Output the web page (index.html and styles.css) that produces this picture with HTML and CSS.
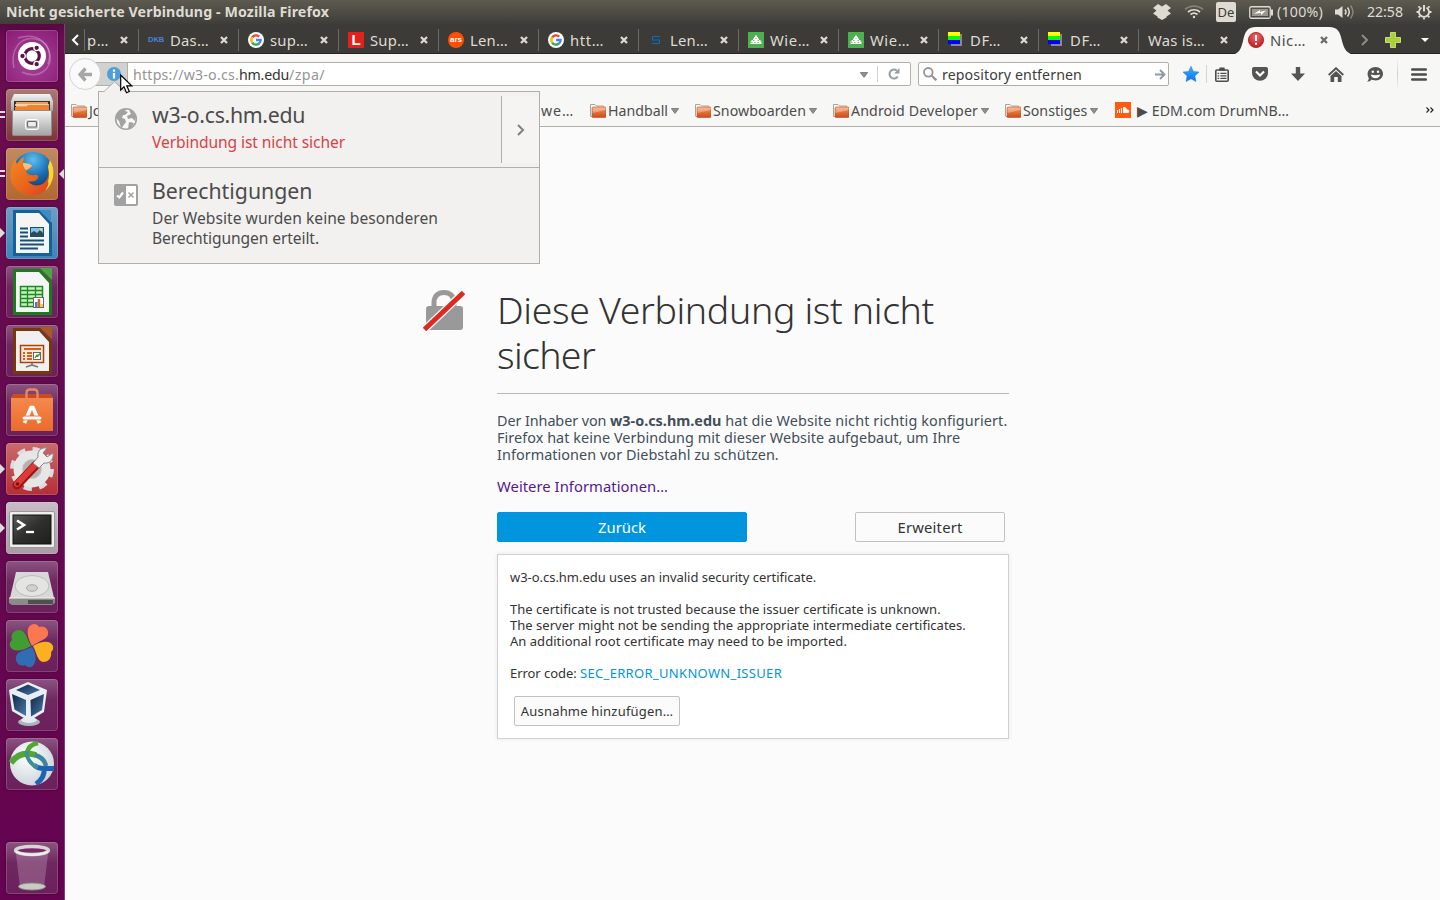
FILE: index.html
```html
<!DOCTYPE html>
<html lang="de">
<head>
<meta charset="utf-8">
<title>Nicht gesicherte Verbindung - Mozilla Firefox</title>
<link rel="stylesheet" href="styles.css">
</head>
<body>
<svg class="defs" width="0" height="0">
  <defs>
    <linearGradient id="gFolder" x1="0" y1="0" x2="0" y2="1"><stop offset="0" stop-color="#f4a26a"/><stop offset=".5" stop-color="#e0703a"/><stop offset="1" stop-color="#cf4a1e"/></linearGradient>
    <linearGradient id="gSteel" x1="0" y1="0" x2="0" y2="1"><stop offset="0" stop-color="#f4f4f4"/><stop offset="1" stop-color="#a3a3a3"/></linearGradient>
    <linearGradient id="gFox" x1="0" y1="0" x2="1" y2="1"><stop offset="0" stop-color="#f48a20"/><stop offset=".6" stop-color="#e8601c"/><stop offset="1" stop-color="#d93c20"/></linearGradient>
    <radialGradient id="gGlobe" cx=".5" cy=".2" r=".8"><stop offset="0" stop-color="#5cc0ee"/><stop offset=".5" stop-color="#1a6fb5"/><stop offset="1" stop-color="#10305f"/></radialGradient>
    <linearGradient id="gBag" x1="0" y1="0" x2="0" y2="1"><stop offset="0" stop-color="#f58d50"/><stop offset="1" stop-color="#ec6a2c"/></linearGradient>
    <linearGradient id="gStar" x1="0" y1="0" x2="0" y2="1"><stop offset="0" stop-color="#3fa9ff"/><stop offset="1" stop-color="#0a78e8"/></linearGradient>
    <linearGradient id="gTerm" x1="0" y1="0" x2="1" y2="1"><stop offset="0" stop-color="#5a5a58"/><stop offset=".5" stop-color="#2f2f2d"/><stop offset="1" stop-color="#1e1e1c"/></linearGradient>
    <radialGradient id="gRed" cx=".5" cy=".3" r=".7"><stop offset="0" stop-color="#f06a6a"/><stop offset="1" stop-color="#c01820"/></radialGradient>
    <radialGradient id="gBall" cx=".4" cy=".35" r=".7"><stop offset="0" stop-color="#fff"/><stop offset="1" stop-color="#c9d3d8"/></radialGradient>
    <linearGradient id="gCube" x1="0" y1="0" x2="1" y2="1"><stop offset="0" stop-color="#0e2748"/><stop offset="1" stop-color="#4a7aa8"/></linearGradient>
  </defs>
  <symbol id="close" viewBox="0 0 8 8"><path d="M1 1L7 7M7 1L1 7" stroke="currentColor" stroke-width="2.3" fill="none"/></symbol>
  <symbol id="google" viewBox="0 0 16 16"><circle cx="8" cy="8" r="8" fill="#fff"/><g fill="none" stroke-width="2.4"><path d="M4.2 5.4A4.6 4.6 0 0 1 11.2 4.7" stroke="#ea4335"/><path d="M4.2 5.4A4.6 4.6 0 0 0 4.2 10.6" stroke="#fbbc05"/><path d="M4.2 10.6A4.6 4.6 0 0 0 11 11.5" stroke="#34a853"/><path d="M8 8H12.6A4.6 4.6 0 0 1 11 11.5" stroke="#4285f4"/></g></symbol>
  <symbol id="folder" viewBox="0 0 16 15"><path d="M.5 13V1.500H5L6.500 3H13.500V6" fill="#fff" stroke="#a5a5a0"/><path d="M.5 13.500H3" stroke="#a5a5a0"/><rect x="2" y="4" width="14" height="10.500" rx="1" fill="url(#gFolder)" stroke="#c24c1c" stroke-width=".6"/><path d="M2.500 10V4.500H15.500V7Z" fill="#fff" opacity=".3"/></symbol>
  <symbol id="down" viewBox="0 0 8 6"><path d="M.3 .5H7.700L4 5.500Z" fill="#8f8f8b" stroke="#74746f" stroke-width=".8"/></symbol>
  <symbol id="trees" viewBox="0 0 16 16"><rect width="16" height="16" fill="#4caf50"/><path d="M7 3.500H9V5H10V6.500H11V8H12.500V9.500H13.500V12H2.500V9.500H3.500V8H5V6.500H6V5H7Z" fill="#fff"/><path d="M5 8.500H6.500M9.500 8.500H11M6 10.500H7.500M9.500 10.500H11M3 10.500H4.500M7.500 6.500H8.500" stroke="#4caf50" stroke-width=".7"/></symbol>
  <symbol id="rainbow" viewBox="0 0 16 16"><rect x="3" y="2" width="11" height="12" fill="#8a8a8a"/><rect width="12" height="4" fill="#ff0"/><rect y="4" width="12" height="4" fill="#0f0"/><rect y="8" width="12" height="4" fill="#00f"/></symbol>
</svg>

<header class="panel">
  <span class="panel-title"><span class="t t1">Nicht gesicherte Verbindung - Mozilla Firefox</span></span>
  <svg class="p-drop" width="18" height="16" viewBox="0 0 18 16" fill="#dfdbd2"><path d="M5 0L9 2.500L13 0L18 4L14.500 6.500L18 9.500L13.500 12.500V13.500L9 16L4.500 13.500V12.500L0 9.500L3.500 6.500L0 4Z"/></svg>
  <svg class="p-wifi" width="20" height="14" viewBox="0 0 20 14" fill="none" stroke="#dfdbd2" stroke-width="1.700"><path d="M1 4.500C6 0 14 0 19 4.500" opacity=".35"/><path d="M4 7C7.500 4 12.500 4 16 7"/><path d="M6.500 9.500C8.500 8 11.500 8 13.500 9.500"/><circle cx="10" cy="12" r="1.200" fill="#dfdbd2" stroke="none"/></svg>
  <span class="p-lang">De</span>
  <svg class="p-bat" width="25" height="13" viewBox="0 0 25 13"><rect x=".75" y=".75" width="20.500" height="11.500" rx="1.500" fill="none" stroke="#dfdbd2" stroke-width="1.300"/><rect x="22" y="3.500" width="2" height="6" fill="#dfdbd2"/><rect x="3" y="3" width="16" height="7" fill="#99968e"/><path d="M5 7.800L11 4V6L17 4.500L12 9V7Z" fill="#fff"/></svg>
  <span class="t t2">(100%)</span>
  <svg class="p-vol" width="20" height="14" viewBox="0 0 20 14" fill="none" stroke="#dfdbd2" stroke-width="1.500"><path d="M0 4.500H3L7.500 1V13L3 9.500H0Z" fill="#dfdbd2" stroke="none"/><path d="M10 4.500Q12 7 10 9.500M12.500 2.500Q16 7 12.500 11.500"/><path d="M15.500 .5Q20.500 7 15.500 13.500" opacity=".4"/></svg>
  <span class="t t3">22:58</span>
  <svg class="p-gear" width="16" height="16" viewBox="0 0 16 16" fill="none" stroke="#dfdbd2"><path d="M5.500 3.600A5 5 0 1 0 10.500 3.600" stroke-width="1.800"/><path d="M8 1V7.500" stroke-width="2"/><path d="M3.700 3.700L2.400 2.400M12.300 3.700L13.600 2.400M3 8H.5M13 8H15.500M4 12L2.600 13.400M12 12L13.400 13.400M8 13.500V15.500" stroke-width="1.800"/></svg>
</header>

<div class="main">
  <nav class="launcher">
    <div class="tile dash"><svg viewBox="0 0 52 52"><g fill="none" stroke="#fff" stroke-opacity=".25" stroke-width="1.500"><path d="M8 38C4 20 14 6 30 9C42 12 46 24 42 34"/><path d="M12 8C32 2 46 14 44 32C40 44 28 48 16 42"/></g><circle cx="26" cy="26" r="14" fill="#fff"/><circle cx="26" cy="26" r="7.300" fill="none" stroke="#5e1049" stroke-width="3.200"/><g fill="#5e1049" stroke="#fff" stroke-width="1.300"><circle cx="16.500" cy="26" r="2.800"/><circle cx="30.700" cy="17.800" r="2.800"/><circle cx="30.700" cy="34.200" r="2.800"/></g></svg></div>
    <div class="tile files"><i class="bars"></i><svg viewBox="0 0 52 52"><path d="M8 5H44L47 12V22H5V12Z" fill="url(#gSteel)"/><rect x="8" y="12" width="36" height="12" fill="#3a322c"/><rect x="10" y="13" width="32" height="10" fill="#f2a04c"/><path d="M9 16H43M11 19H41" stroke="#fbe8d0" stroke-width="1.300"/><path d="M9 18H20L22 16H43V24H9Z" fill="#ee8230"/><rect x="6.500" y="21.500" width="39" height="25" rx="1" fill="url(#gSteel)" stroke="#8d8d8d"/><rect x="19.500" y="30.500" width="13" height="10" rx="2" fill="#d0d0d0" stroke="#fff"/><rect x="21.500" y="32.500" width="9" height="5.500" rx="1" fill="#eee" stroke="#6a6a6a" stroke-width="1.200"/></svg></div>
    <div class="tile fox"><i class="bars"></i><i class="focus"></i><svg viewBox="0 0 52 52"><circle cx="27" cy="24" r="20" fill="url(#gGlobe)"/><path d="M44 12C50 22 48 36 39 43C31 49 18 49 10 41C3 34 3 23 7 15L9 11L11 16C13 13 15 10 18 9L17 15C21 15 25 16 26 18C25 21 22 22 20 23C21 26 24 28 29 27C31 26 33 28 32 30C30 34 25 34 22 33C25 38 33 39 38 35C43 31 43 24 42 19Z" fill="url(#gFox)"/><path d="M44 12C50 22 48 36 39 43C42 38 43 36 42 33C44 28 43 23 42 19Z" fill="#fcd835"/><path d="M17 15C21 15 25 16 26 18C24 20 22 21 20 22C18 20 17 18 17 15Z" fill="#fbc084"/></svg></div>
    <div class="tile writer"><i class="run"></i><svg viewBox="0 0 52 52"><path d="M7 3H34L46 16V49H7Z" fill="#14619b"/><path d="M10 6H33L43 17V46H10Z" fill="#f5f5f5"/><path d="M33 3H45V15Z" fill="#3f8cc0"/><g stroke="#16507a" stroke-width="2"><path d="M14 21.500H22M14 25.500H22M14 29.500H22M14 33.500H38M14 37.500H38M14 41.500H32"/></g><rect x="24.500" y="20.500" width="13" height="9" fill="#7cc4ee" stroke="#16507a"/><path d="M25 29V26L28 24L31 26L34 23L37 26V29Z" fill="#2d4a55"/><circle cx="35" cy="22.500" r="1.300" fill="#f8d749"/></svg></div>
    <div class="tile"><svg viewBox="0 0 52 52"><path d="M7 3H34L46 16V49H7Z" fill="#1a7d1c"/><path d="M10 6H33L43 17V46H10Z" fill="#f5f5f5"/><path d="M34 2H46V14Z" fill="#47a83e"/><rect x="14.500" y="20.500" width="22" height="20" fill="#c9f0bd" stroke="#1c8c22" stroke-width="1.500"/><path d="M14 24.500H37M14 28.500H37M14 32.500H37M14 36.500H37M21.500 20V41M29.500 20V41" stroke="#1c8c22" stroke-width="1.300"/><rect x="27.500" y="31.500" width="10" height="10" fill="#fff" stroke="#667"/><rect x="29" y="36" width="2.500" height="5" fill="#3385c6"/><rect x="31.700" y="33" width="2.500" height="8" fill="#e25a26"/><rect x="34.500" y="38" width="2.300" height="3" fill="#f2c61f"/></svg></div>
    <div class="tile"><svg viewBox="0 0 52 52"><path d="M7 3H34L46 16V49H7Z" fill="#78380c"/><path d="M10 6H33L43 17V46H10Z" fill="#f0f0f0"/><path d="M34 2H46V14Z" fill="#a85a20"/><rect x="14.500" y="20.500" width="23" height="17" fill="#fce8da" stroke="#a8420c" stroke-width="1.500"/><path d="M18 24H35M17 28H19M17 31H19M17 34H19M21 28H26M21 31H26M21 34H26" stroke="#d4601c" stroke-width="2"/><rect x="27.500" y="27.500" width="7" height="7" fill="#fff" stroke="#666"/><path d="M29 33L31 30L32 31L34 28.500" stroke="#329b32" fill="none" stroke-width="1.300"/><path d="M26 38V40L20 42M26 40L32 42" stroke="#777" stroke-width="1.500" fill="none"/></svg></div>
    <div class="tile"><svg viewBox="0 0 52 52"><path d="M5 14L8 10H44L47 14V47H5Z" fill="url(#gBag)"/><path d="M5 14L8 10H44L47 14Z" fill="#c84d1a"/><path d="M20.500 17V9Q20.500 5.500 24 5.500H28Q31.500 5.500 31.500 9V17" fill="none" stroke="#e58a60" stroke-width="2.300"/><path d="M18.500 39L25 23.500H27L33.500 39" fill="none" stroke="#fff" stroke-width="3.600"/><path d="M17 34H35" stroke="#ee7436" stroke-width="4.800"/><path d="M18 34H34" stroke="#fff" stroke-width="3" stroke-linecap="round"/></svg></div>
    <div class="tile settings"><i class="run"></i><svg viewBox="0 0 52 52"><circle cx="26" cy="26" r="19.500" fill="none" stroke="#dcdcdc" stroke-width="5" stroke-dasharray="8 7.320"/><circle cx="26" cy="26" r="14" fill="none" stroke="#e6e6e6" stroke-width="9"/><circle cx="26" cy="26" r="9.500" fill="#b7b0b0" stroke="#cfcfcf"/><path d="M11 42L30 22" stroke="#a01414" stroke-width="9" stroke-linecap="round"/><path d="M11 41L30 21" stroke="#dd3b38" stroke-width="6" stroke-linecap="round"/><path d="M27 20L33 25L38 20C44 21 48 16 47 10L41 14L37 10L41 5C35 4 31 8 32 14Z" fill="#eee" stroke="#888"/><circle cx="11.500" cy="41" r="1.800" fill="#7a1010"/></svg></div>
    <div class="tile term"><i class="run"></i><svg viewBox="0 0 52 52"><rect x="3.500" y="9.500" width="45" height="36" rx="1.500" fill="#eee" stroke="#999"/><rect x="7" y="13" width="38" height="29" fill="url(#gTerm)" stroke="#111"/><path d="M11 18.500L18 23L11 27.500" fill="none" stroke="#fff" stroke-width="2.600"/><path d="M20 30H28" stroke="#fff" stroke-width="2.300"/></svg></div>
    <div class="tile"><svg viewBox="0 0 52 52"><path d="M10 11H42L48 37H4Z" fill="#d8d8d6"/><path d="M3 37H49V42L46 44H6L3 42Z" fill="#8b8b89"/><path d="M22 39H47V43H22Z" fill="#50504e"/><ellipse cx="26" cy="25" rx="17" ry="10.500" fill="#e4e4e2" stroke="#bbb"/><ellipse cx="26" cy="27" rx="5.500" ry="3.300" fill="#d0d0ce" stroke="#aaa"/><path d="M3 37H49" stroke="#f3f3f3"/></svg></div>
    <div class="tile"><svg viewBox="0 0 52 52"><path d="M26 26C20 15 20 5 28 4C32 4 33 7 33 7C38 5 43 9 42 14C42 19 33 21 26 26Z" fill="#fb7750"/><path d="M25 26C15 32 6 32 4 26C3 22 6 20 6 20C4 15 8 9 14 10C20 11 21 19 25 26Z" fill="#3f9d33"/><path d="M26 27C32 36 30 45 25 47C21 48 19 45 19 45C14 47 9 43 10 37C11 31 20 30 26 27Z" fill="#2f6db5"/><path d="M27 26C37 20 45 21 47 26C48 30 45 32 45 32C46 37 43 42 37 42C31 41 31 33 27 26Z" fill="#fbb020"/></svg></div>
    <div class="tile"><svg viewBox="0 0 52 52"><ellipse cx="23" cy="43" rx="11" ry="4" fill="#a9b4bf"/><ellipse cx="23" cy="41" rx="8" ry="3" fill="#e3e9ee"/><path d="M3 11L22 3L41 11L38 33L23 42L6 32Z" fill="#e8eef4"/><path d="M10 11L22 5.500L34 11L22 16Z" fill="url(#gCube)"/><path d="M6 15L20 21V37L8.500 30.500Z" fill="url(#gCube)"/><path d="M24.500 21L38 15L36 31L25 37.500Z" fill="url(#gCube)"/></svg></div>
    <div class="tile"><svg viewBox="0 0 52 52"><circle cx="26" cy="25.500" r="22" fill="url(#gBall)"/><path d="M5 25C11 16 20 14 30 17" fill="none" stroke="#54a536" stroke-width="6"/><path d="M29 17C36 19 39 23 40 28" fill="none" stroke="#3a86a0" stroke-width="4.500"/><path d="M21 15C22 9 26 6 32 5" fill="none" stroke="#54a536" stroke-width="4.500"/><path d="M28 27C31 30 34 30.500 38 30.500H48M38 29C39 37 36 42 30 46" fill="none" stroke="#1c64b0" stroke-width="5"/><path d="M21 13C20 20 25 27 32 29.500" fill="none" stroke="#3f8f9a" stroke-width="4"/></svg></div>
    <div class="tile trash"><svg viewBox="0 0 52 52"><path d="M10 12L14 46Q26 50 38 46L42 12Z" fill="#fff" fill-opacity=".2"/><ellipse cx="26" cy="44.500" rx="13.500" ry="3.500" fill="#c9cbc5" stroke="#8c8e88"/><ellipse cx="26" cy="8.500" rx="16.500" ry="4" fill="#7b2867" stroke="#d5d7d0" stroke-width="3.300"/><path d="M10 10Q26 16 42 10" fill="none" stroke="#eee" stroke-width="2"/></svg></div>
  </nav>

  <div class="browser">
    <div class="tabs">
      <svg class="scroll-l" width="8" height="12" viewBox="0 0 8 12"><path d="M7 1L2 6L7 11" fill="none" stroke="#fff" stroke-width="2"/></svg>
      <div class="tab first"><span class="label"><span class="t t4">p…</span></span><svg class="x"><use href="#close"/></svg></div>
      <div class="tab"><span class="fav dkb">DKB</span><span class="label"><span class="t t5">Das…</span></span><svg class="x"><use href="#close"/></svg></div>
      <div class="tab"><svg class="fav"><use href="#google"/></svg><span class="label"><span class="t t5">sup…</span></span><svg class="x"><use href="#close"/></svg></div>
      <div class="tab"><span class="fav leo">L</span><span class="label"><span class="t t5">Sup…</span></span><svg class="x"><use href="#close"/></svg></div>
      <div class="tab"><span class="fav ars">ars</span><span class="label"><span class="t t5">Len…</span></span><svg class="x"><use href="#close"/></svg></div>
      <div class="tab"><svg class="fav"><use href="#google"/></svg><span class="label"><span class="t t9">htt…</span></span><svg class="x"><use href="#close"/></svg></div>
      <div class="tab"><svg class="fav" viewBox="0 0 16 16"><path d="M12 4.500H4.500V8H11.500V11.500H4" fill="none" stroke="#0a6cb4" stroke-width="1.200"/></svg><span class="label"><span class="t t5">Len…</span></span><svg class="x"><use href="#close"/></svg></div>
      <div class="tab"><svg class="fav"><use href="#trees"/></svg><span class="label"><span class="t t9">Wie…</span></span><svg class="x"><use href="#close"/></svg></div>
      <div class="tab"><svg class="fav"><use href="#trees"/></svg><span class="label"><span class="t t9">Wie…</span></span><svg class="x"><use href="#close"/></svg></div>
      <div class="tab"><svg class="fav"><use href="#rainbow"/></svg><span class="label"><span class="t t9">DF…</span></span><svg class="x"><use href="#close"/></svg></div>
      <div class="tab"><svg class="fav"><use href="#rainbow"/></svg><span class="label"><span class="t t9">DF…</span></span><svg class="x"><use href="#close"/></svg></div>
      <div class="tab noicon"><span class="label"><span class="t t12">Was is…</span></span><svg class="x"><use href="#close"/></svg></div>
      <div class="tab active">
        <svg class="shape" width="126" height="28" viewBox="0 0 126 28"><path d="M0 28C8 27 10 22 12 14C14 5 16 0 25 0H98C107 0 109 5 111 14C113 22 116 27 124 28Z" fill="#f7f7f6"/></svg>
        <svg class="fav" viewBox="0 0 16 16"><circle cx="8" cy="8" r="7.600" fill="url(#gRed)" stroke="#a81a20" stroke-width=".8"/><path d="M8 3V9M8 10.800V12.800" stroke="#fff" stroke-width="2"/></svg>
        <span class="label"><span class="t t13">Nic…</span></span><svg class="x"><use href="#close"/></svg>
      </div>
      <svg class="scroll-r" width="8" height="12" viewBox="0 0 8 12"><path d="M1 1L6 6L1 11" fill="none" stroke="#8d8c88" stroke-width="2"/></svg>
      <svg class="plus" width="16" height="16" viewBox="0 0 16 16"><path d="M5.500 .5H10.500V5.500H15.500V10.500H10.500V15.500H5.500V10.500H.5V5.500H5.500Z" fill="#a8cf3c" stroke="#c3df6c"/></svg>
      <svg class="all" width="8" height="4" viewBox="0 0 8 4"><path d="M0 0H8L4 4Z" fill="#fff"/></svg>
    </div>

    <div class="navbar">
      <div class="back"><svg width="14" height="15" viewBox="0 0 14 15"><path d="M7.500 1.500L2 7.500L7.500 13.500M2.500 7.500H14" fill="none" stroke="#a6a6a4" stroke-width="3.400"/></svg></div>
      <div class="url">
        <div class="ident"><svg width="14" height="14" viewBox="0 0 14 14"><circle cx="7" cy="7" r="7" fill="#4a9fdc"/><path d="M7 2.500V4.800M7 6V11.500" stroke="#fff" stroke-width="2.200"/></svg></div>
        <span class="addr"><span class="t t14">https://w3-o.cs.</span><span class="t t15 host">hm.edu</span><span class="t t16">/zpa/</span></span>
        <svg class="tri" width="8" height="6"><use href="#down"/></svg>
        <div class="reload"><svg width="12" height="12" viewBox="0 0 12 12"><path d="M9.800 8.500A4.500 4.500 0 1 1 8.800 2.500" fill="none" stroke="#939da8" stroke-width="2"/><path d="M11.500 0V5.500H6Z" fill="#939da8"/></svg></div>
      </div>
      <div class="search">
        <svg width="14" height="14" viewBox="0 0 14 14" fill="none" stroke="#969696"><circle cx="5.300" cy="5.300" r="4.300" stroke-width="1.800"/><path d="M8.500 8.500L13.300 13.300" stroke-width="2.300"/></svg>
        <span class="q"><span class="t t17">repository entfernen</span></span>
        <svg class="go" width="11" height="11" viewBox="0 0 11 11"><path d="M0 5.500H9M5 1L9.500 5.500L5 10" fill="none" stroke="#8e9aa6" stroke-width="1.900"/></svg>
      </div>
      <div class="tools">
        <svg width="16" height="16" viewBox="0 0 16 16"><path d="M8 .3L10.400 5.400L16 6.100L11.900 9.900L13 15.600L8 12.800L3 15.600L4.100 9.900L0 6.100L5.600 5.400Z" fill="url(#gStar)" stroke="#1b7fe0" stroke-width=".5"/></svg>
        <i class="sep"></i>
        <svg class="tl" width="14" height="15" viewBox="0 0 14 15"><rect x=".8" y="3" width="12.400" height="11.200" rx="1" fill="#f7f7f6" stroke="#4c4c4c" stroke-width="1.600"/><path d="M4 3.800L4.500 .5H9.500L10 3.800Z" fill="#4c4c4c"/><path d="M2.600 6.300H4.200M2.600 8.800H4.200M2.600 11.300H4.200M5.400 6.300H11.500M5.400 8.800H11.500M5.400 11.300H11.500" stroke="#4c4c4c" stroke-width="1.300"/></svg>
        <svg class="tp" width="16" height="14" viewBox="0 0 16 14"><path d="M2 0H14Q16 0 16 2V6A8 7.800 0 0 1 0 6V2Q0 0 2 0Z" fill="#555"/><path d="M4 4.500L8 8.500L12 4.500" stroke="#fff" stroke-width="2.200" fill="none"/></svg>
        <svg class="td" width="14" height="14" viewBox="0 0 14 14"><path d="M4.800 0H9.200V6.500H14L7 14L0 6.500H4.800Z" fill="#555"/></svg>
        <svg class="th" width="16" height="15" viewBox="0 0 16 15"><path d="M.7 8L8 1.200L15.300 8" fill="none" stroke="#555" stroke-width="1.900"/><path d="M2.500 9L8 4L13.500 9V15H9.800V10H6.200V15H2.500Z" fill="#555"/></svg>
        <svg class="tc" width="16" height="15" viewBox="0 0 16 15"><path d="M8.500 0C13 0 16 3 16 6.800C16 10.500 13 13.500 8.500 13.500C7 13.500 5.500 13.200 4.500 12.600C3.500 14 2 14.800 0 14.800C1.200 13.700 1.800 12.500 1.800 11C1 9.800 .6 8.500 .6 6.800C.6 3 4 0 8.500 0Z" fill="#555"/><circle cx="5.800" cy="4.800" r="1.200" fill="#fff"/><circle cx="11" cy="4.800" r="1.200" fill="#fff"/><path d="M3.800 7.500Q8.500 9 13.200 7.500C12.700 10 11 11.300 8.500 11.300S4.300 10 3.800 7.500Z" fill="#fff"/></svg>
        <i class="sep tall"></i>
        <svg class="tm" width="16" height="13" viewBox="0 0 16 13"><path d="M1.200 1.500H14.800M1.200 6.500H14.800M1.200 11.500H14.800" stroke="#4c4c4c" stroke-width="2.600" stroke-linecap="round"/></svg>
      </div>
    </div>

    <div class="bookmarks">
      <div class="bm b0"><svg class="fo"><use href="#folder"/></svg><span class="t">Jobs</span></div>
      <div class="bm b1"><span class="t t19">we…</span></div>
      <div class="bm b2"><svg class="fo"><use href="#folder"/></svg><span class="t">Handball</span><svg class="tri"><use href="#down"/></svg></div>
      <div class="bm b3"><svg class="fo"><use href="#folder"/></svg><span class="t t21">Snowboarden</span><svg class="tri"><use href="#down"/></svg></div>
      <div class="bm b4"><svg class="fo"><use href="#folder"/></svg><span class="t t22">Android Developer</span><svg class="tri"><use href="#down"/></svg></div>
      <div class="bm b5"><svg class="fo"><use href="#folder"/></svg><span class="t">Sonstiges</span><svg class="tri"><use href="#down"/></svg></div>
      <div class="bm b6"><svg class="sc" viewBox="0 0 16 16"><rect width="16" height="16" fill="#ff5a10"/><path d="M2.500 8V11M4.500 7V11M6.500 6V11" stroke="#fff" stroke-width="1.100"/><path d="M8 5.200C10 4.500 11.500 5.700 11.800 7.500C13 7.200 14.300 8 14.300 9.200C14.300 10.300 13.500 11 12.500 11H8Z" fill="#fff"/></svg><span class="t t24">▶ EDM.com DrumNB…</span></div>
      <svg class="more" width="8" height="6" viewBox="0 0 8 6"><path d="M.5 .5L3 3L.5 5.500M4.500 .5L7 3L4.500 5.500" fill="none" stroke="#222" stroke-width="1.200"/></svg>
    </div>

    <main class="page">
      <svg class="lock" width="42" height="42" viewBox="0 0 42 42"><path d="M11 18V13C11 6 15 2.500 21 2.500S31 6 31 13V18" fill="none" stroke="#999" stroke-width="5"/><rect x="3" y="16" width="37" height="24" rx="3" fill="#999"/><path d="M0 41L42 1" stroke="#fbfbfb" stroke-width="7.500"/><path d="M1.500 39.500L40.500 2.500" stroke="#dc2a21" stroke-width="5"/></svg>
      <div class="content">
        <h1><span class="t t25">Diese Verbindung ist nicht</span><span class="t t26">sicher</span></h1>
        <p class="desc"><span class="t t27">Der Inhaber von </span><b class="t">w3-o.cs.hm.edu</b><span class="t t29"> hat die Website nicht richtig konfiguriert.</span><br><span class="t t30">Firefox hat keine Verbindung mit dieser Website aufgebaut, um Ihre</span><br><span class="t t30">Informationen vor Diebstahl zu schützen.</span></p>
        <a class="learn"><span class="t t32">Weitere Informationen…</span></a>
        <div class="buttons"><button class="primary"><span class="t">Zurück</span></button><button class="adv"><span class="t t34">Erweitert</span></button></div>
        <section class="cert">
          <p><span class="t t35">w3-o.cs.hm.edu uses an invalid security certificate.</span></p>
          <p><span class="t t36">The certificate is not trusted because the issuer certificate is unknown.</span><br><span class="t t36">The server might not be sending the appropriate intermediate certificates.</span><br><span class="t t36">An additional root certificate may need to be imported.</span></p>
          <p><span class="t t39">Error code: </span><a class="t t40">SEC_ERROR_UNKNOWN_ISSUER</a></p>
          <button class="exc"><span class="t t41">Ausnahme hinzufügen…</span></button>
        </section>
      </div>
    </main>
  </div>
</div>

<aside class="popup">
  <svg class="arrow" width="22" height="11" viewBox="0 0 22 11"><path d="M0 10.500L1 10L10.500 .7L21 10.500V11H0Z" fill="#f2f1f0"/><path d="M0 10.500L10.500 .7L21 10.500" fill="none" stroke="#b0afab"/></svg>
  <div class="row r1">
    <svg class="ic" width="24" height="24" viewBox="0 0 24 24"><circle cx="12" cy="12" r="10.300" fill="#f7f7f6" stroke="#a2a2a2" stroke-width="1.600"/><path d="M3 7C5 3 9 1.500 13 2L11 4L14 5L11 8L9 8L8 11L11 12L12 15L9 19L8 21C6 19 6 17 5 14L2 11ZM15 3C19 4 21 7 22 10L21 14L18 11L14 12L13 9L17 7ZM15 15L20 16C19 19 17 21 14 22Z" fill="#a2a2a2"/></svg>
    <div class="txt"><h2><span class="t t42">w3-o.cs.hm.edu</span></h2><p class="bad"><span class="t t43">Verbindung ist nicht sicher</span></p></div>
    <div class="expand"><svg width="8" height="12" viewBox="0 0 8 12"><path d="M1 1L6 6L1 11" fill="none" stroke="#808080" stroke-width="2"/></svg></div>
  </div>
  <div class="row r2">
    <svg class="ic" width="24" height="22" viewBox="0 0 24 22"><rect width="24" height="22" rx="2" fill="#a2a2a2"/><rect x="12" y="2" width="10" height="18" fill="#fff"/><path d="M3 11.500L5.300 13.500L9 8.500" fill="none" stroke="#fff" stroke-width="2.200"/><path d="M14.500 8.500L19.500 13.500M19.500 8.500L14.500 13.500" stroke="#a2a2a2" stroke-width="1.500"/></svg>
    <div class="txt"><h2><span class="t">Berechtigungen</span></h2><p><span class="t t45">Der Website wurden keine besonderen</span><br><span class="t t46">Berechtigungen erteilt.</span></p></div>
  </div>
</aside>
<svg class="cursor" width="13" height="20" viewBox="0 0 13 20"><path d="M.7 1V16L4 12.800L6.500 18.700L9.300 17.500L6.800 11.800H11.700Z" fill="#fff" stroke="#000" stroke-width="1.200"/></svg>
</body>
</html>
```
FILE: styles.css
```css
* { box-sizing: border-box; }
body { margin: 0; width: 1440px; height: 900px; overflow: hidden; display: flex; flex-direction: column; background: #fbfbfb; font-family: "Noto Sans", "Open Sans", sans-serif; font-size: 14.2px; color: #4c4c4c; }
svg { display: block; flex: none; }
h1, h2, p { margin: 0; font-weight: 400; }
.defs { position: absolute; }

/* per-string tracking */
.t { white-space: pre; }
.t1 { letter-spacing: .113px; }
.t2 { letter-spacing: .224px; }
.t3 { letter-spacing: -.053px; }
.t4 { letter-spacing: .6px; }
.t5 { letter-spacing: .25px; }
.t9 { letter-spacing: .6px; }
.t12 { letter-spacing: .25px; }
.t13 { letter-spacing: .5px; }
.t14 { letter-spacing: .217px; }
.t15 { letter-spacing: -.224px; }
.t16 { letter-spacing: .416px; }
.t17 { letter-spacing: .099px; }
.t19 { letter-spacing: .87px; }
.t21 { letter-spacing: .058px; }
.t22 { letter-spacing: .122px; }
.t24 { letter-spacing: .041px; }
.t25 { letter-spacing: -.365px; }
.t26 { letter-spacing: -.667px; }
.t27 { letter-spacing: -.085px; }
.t29 { letter-spacing: .124px; }
.t30 { letter-spacing: .06px; }
.t32 { letter-spacing: .036px; }
.t34 { letter-spacing: .2px; }
.t35 { letter-spacing: -.035px; }
.t36 { letter-spacing: .027px; }
.t39 { letter-spacing: -.05px; }
.t40 { letter-spacing: .32px; }
.t41 { letter-spacing: .2px; }
.t42 { letter-spacing: -.326px; }
.t43 { letter-spacing: -.094px; }
.t45 { letter-spacing: .033px; }
.t46 { letter-spacing: -.091px; }

/* top panel */
.panel { height: 24px; flex: none; display: flex; align-items: center; padding: 0 8px 0 6px; background: linear-gradient(#5d5b50, #3e3d39); color: #dfdbd2; line-height: 24px; }
.panel-title { font-weight: 700; margin-right: auto; }
.p-drop { margin-right: 13px; }
.p-wifi { margin-right: 12px; }
.p-lang { width: 20px; height: 20px; background: #dfdbd2; color: #3c3b37; border-radius: 2px; line-height: 20px; text-align: center; font-size: 13px; margin-right: 13px; }
.p-bat { margin-right: 3px; }
.p-vol { margin: 0 12px; }
.p-gear { margin-left: 13px; }

/* launcher */
.main { flex: 1; display: flex; min-height: 0; }
.launcher { width: 65px; flex: none; display: flex; flex-direction: column; gap: 7px; padding: 6px 0 6px 6px; background: linear-gradient(#540a40 0, #6a0c50 12px, #640a4f 50%, #650350); border-right: 1px solid #843a72; }
.tile { width: 52px; height: 52px; flex: none; position: relative; border-radius: 4px; background: linear-gradient(#8b5480, #6e2860 40%, #6c205c); box-shadow: inset 0 0 0 1px rgba(255,255,255,.16), 0 0 3px rgba(0,0,0,.3); }
.tile svg { width: 52px; height: 52px; }
.dash { background: radial-gradient(circle at 50% 60%, #a8459a, #8a1a74); }
.files { background: linear-gradient(#a97a76, #7d3339); }
.fox { background: linear-gradient(#c28a62, #b1682f); }
.writer { background: linear-gradient(#6f9fc3, #3d83b8); }
.settings { background: linear-gradient(#c96a6c, #b52f34); }
.term { background: linear-gradient(#c9bcc6, #a99aa6); }
.trash { margin-top: auto; }
.bars { position: absolute; left: -6px; top: 22px; width: 5px; height: 7px; border-top: 2px solid #ddd; border-bottom: 2px solid #ddd; }
.run { position: absolute; left: -6px; top: 21px; border: 5px solid transparent; border-left-color: #ddd; border-right: 0; }
.focus { position: absolute; left: 53px; top: 21px; border: 5px solid transparent; border-right-color: #ddd; border-left: 0; }

/* tab strip */
.browser { flex: 1; display: flex; flex-direction: column; min-width: 0; }
.tabs { height: 30px; flex: none; display: flex; align-items: center; background: #3c3b37; border-bottom: 1px solid #262521; color: #dfdbd2; padding: 3px 0 0 6px; font-size: 14.8px; }
.scroll-l { margin-right: 5px; }
.tab { width: 100px; height: 22px; flex: none; display: flex; align-items: center; border-left: 1px solid #6c6b67; padding-left: 9px; position: relative; line-height: 22px; }
.tab.first { width: 54px; padding-left: 2px; }
.label { flex: 1; padding-left: 6px; overflow: hidden; white-space: nowrap; }
.first .label, .noicon .label { padding-left: 0; }
.fav { width: 16px; height: 16px; flex: none; }
.dkb { font: 700 7.5px/16px "Liberation Sans", sans-serif; color: #4b80e0; }
.leo { background: #e2211c; color: #fff; font: 700 15px/16px "Liberation Sans", sans-serif; text-align: center; }
.ars { background: #ff4e00; color: #fff; border-radius: 8px; font: 700 8px/15px "Liberation Sans", sans-serif; text-align: center; }
.x { width: 8px; height: 8px; margin-right: 10px; color: #dfdbd2; }
.tab.active { border: 0; color: #4c4c4c; padding-left: 10px; }
.active .x { color: #6a6a68; }
.active > * { position: relative; }
.active > .shape { position: absolute; left: -7px; top: -2px; }
.scroll-r { margin-left: 23px; }
.plus { margin-left: 16px; }
.all { margin-left: 20px; }

/* navigation bar */
.navbar { height: 40px; flex: none; display: flex; align-items: center; background: #f7f7f6; padding-left: 4px; }
.back { width: 32px; height: 32px; border: 1px solid #d4d4d1; border-radius: 50%; background: #fafafa; display: flex; align-items: center; justify-content: center; position: relative; z-index: 1; }
.url { width: 818px; height: 24px; margin-left: -8px; border: 1px solid #b0afa8; border-radius: 2px; background: #fff; display: flex; align-items: center; line-height: 22px; color: #959595; }
.ident { width: 34px; height: 22px; background: #d1d1cf; border-right: 1px solid #b0afa8; display: flex; align-items: center; padding-left: 13px; margin-right: 5px; }
.addr { flex: 1; display: flex; padding-top: 2px; }
.host { color: #333; }
.url .tri { margin: 2px 9px 0 0; }
.reload { height: 16px; border-left: 1px solid #d2d2d0; padding: 2px 10px 0; }
.search { width: 251px; height: 24px; margin-left: 7px; border: 1px solid #b0afa8; border-radius: 2px; background: #fff; display: flex; align-items: center; padding: 0 2px 0 4px; color: #3c3c3c; line-height: 22px; }
.q { flex: 1; padding: 2px 0 0 5px; }
.tools { flex: 1; height: 40px; display: flex; align-items: center; padding-left: 14px; }
.sep { width: 1px; height: 18px; background: #d4d4d2; margin-left: 7px; }
.sep.tall { height: 34px; margin-left: 14px; background: linear-gradient(transparent, #d0d0ce, transparent); }
.tl { margin-left: 8px; }
.tp, .td, .th, .tc { margin-left: 23px; }
.tm { margin-left: 13px; }

/* bookmarks toolbar */
.bookmarks { height: 33px; flex: none; display: flex; align-items: center; background: #f7f7f6; border-bottom: 1px solid #b0afa8; padding-left: 6px; line-height: 30px; }
.bm { display: flex; align-items: center; flex: none; }
.bm .t { padding-top: 2px; }
.bm .tri { width: 8px; height: 6px; margin: 2px 0 0 3px; }
.fo { width: 16px; height: 15px; margin-right: 2px; }
.b0 { width: 470px; } .b1 { width: 49px; } .b2 { width: 105px; } .b3 { width: 138px; } .b4 { width: 172px; } .b5 { width: 110px; }
.sc { width: 16px; height: 16px; margin-right: 6px; }
.more { margin-left: auto; margin-right: 6px; }

/* error page */
.page { flex: 1; display: flex; align-items: flex-start; padding: 160px 0 0 358px; }
.lock { margin-top: 3px; }
.content { width: 512px; margin-left: 32px; }
h1 { font-weight: 300; font-size: 37.5px; line-height: 45px; color: #333; padding-bottom: 16px; border-bottom: 1px solid #b9b9b9; }
h1 .t { display: block; height: 45px; }
.desc { margin-top: 18px; font-size: 14.4px; line-height: 17px; color: #424e5a; }
.learn { display: block; margin-top: 15px; font-size: 14.8px; line-height: 17px; color: #551a8b; }
.buttons { display: flex; justify-content: space-between; margin: 17px 4px 12px 0; }
button { font: inherit; font-size: 14.8px; line-height: 28px; padding: 0; height: 30px; border: 1px solid #c1c1c1; border-radius: 2px; background: #fbfbfb; color: #333; }
.primary { width: 250px; background: #0095dd; border-color: #0095dd; color: #fff; }
.adv { width: 150px; }
.cert { height: 185px; border: 1px solid #d1d1d1; background: #fff; box-shadow: 0 0 5px rgba(0,0,0,.08); padding: 14px 12px; font-size: 13px; line-height: 16px; color: #333; }
.cert p { margin-bottom: 16px; }
.cert a { color: #0095dd; }
.exc { width: 166px; margin: -1px 0 0 4px; font-size: 13px; }

/* site identity popup */
.popup { position: absolute; left: 98px; top: 91px; width: 442px; height: 173px; border: 1px solid #b0afab; background: #f2f1f0; color: #4c4c4c; }
.arrow { position: absolute; left: 5px; top: -11px; }
.row { display: flex; }
.r1 { height: 76px; border-bottom: 1px solid #b0afab; }
.ic { margin: 15px 14px 0 15px; }
.r2 .ic { margin-top: 16px; }
.txt { flex: 1; }
h2 { font-size: 21.3px; line-height: 28px; padding-top: 9px; }
.popup p { font-size: 15.6px; line-height: 20px; margin-top: 3px; }
.popup .bad { color: #d74345; }
.expand { width: 38px; height: 67px; margin-top: 4px; border-left: 1px solid #b0afab; background: #f5f4f3; display: flex; align-items: center; justify-content: center; }
.cursor { position: absolute; left: 120px; top: 74px; }
```
